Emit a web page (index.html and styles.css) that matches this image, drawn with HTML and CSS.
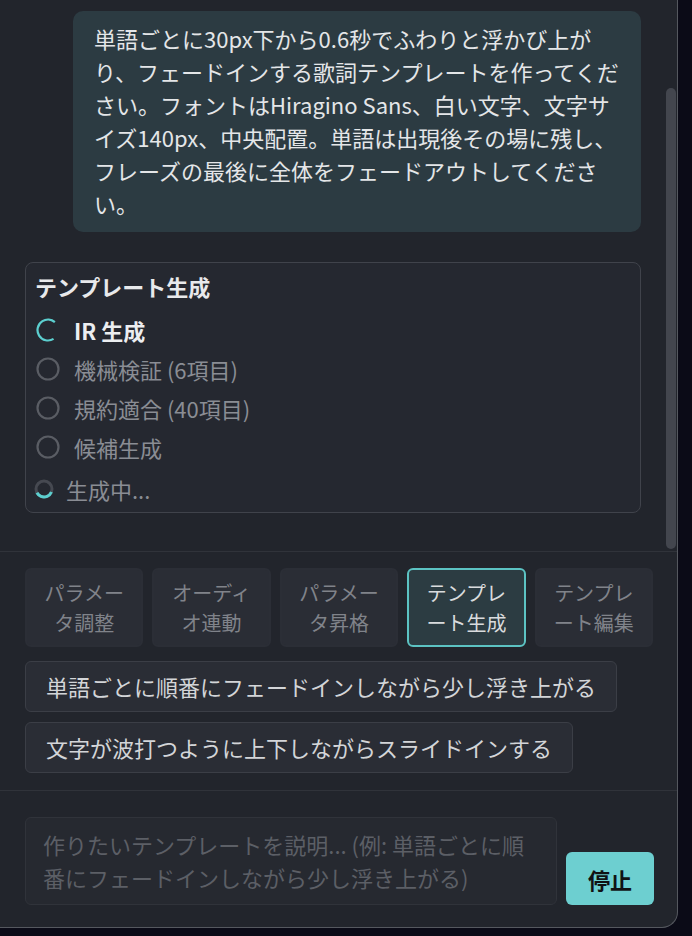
FILE: index.html
```html
<!DOCTYPE html>
<html lang="ja">
<head>
  <meta charset="UTF-8" />
  <title>テンプレート生成</title>
  <link rel="stylesheet" href="styles.css">
</head>
<body>

  <div class="panel">

    <div class="messages">
      <div class="thread">
        <div class="msg-user">
          単語ごとに30px下から0.6秒でふわりと浮かび上が<br>り、フェードインする歌詞テンプレートを作ってくだ<br>さい。フォントはHiragino Sans、白い文字、文字サ<br>イズ140px、中央配置。単語は出現後その場に残し、<br>フレーズの最後に全体をフェードアウトしてくださ<br>い。
        </div>

        <div class="progress-card">
          <h3>テンプレート生成</h3>
          <ul class="steps">
            <li class="step active">
              <svg width="24" height="24" viewBox="0 0 24 24">
                <circle cx="12" cy="12" r="10.5" fill="none" stroke="#5ccfcf" stroke-width="2.2" stroke-dasharray="46 66" transform="rotate(58 12 12)" />
              </svg>
              <span>IR 生成</span>
            </li>
            <li class="step">
              <svg width="24" height="24" viewBox="0 0 24 24">
                <circle cx="12" cy="12" r="10.5" fill="none" stroke="#5a5d64" stroke-width="2.2" />
              </svg>
              <span>機械検証 (6項目)</span>
            </li>
            <li class="step">
              <svg width="24" height="24" viewBox="0 0 24 24">
                <circle cx="12" cy="12" r="10.5" fill="none" stroke="#5a5d64" stroke-width="2.2" />
              </svg>
              <span>規約適合 (40項目)</span>
            </li>
            <li class="step">
              <svg width="24" height="24" viewBox="0 0 24 24">
                <circle cx="12" cy="12" r="10.5" fill="none" stroke="#5a5d64" stroke-width="2.2" />
              </svg>
              <span>候補生成</span>
            </li>
          </ul>
          <div class="status">
            <svg width="20" height="20" viewBox="0 0 20 20">
              <circle cx="10" cy="10" r="8" fill="none" stroke="#464951" stroke-width="3" />
              <circle cx="10" cy="10" r="8" fill="none" stroke="#5ccfcf" stroke-width="3" stroke-dasharray="18 50.3" transform="rotate(22 10 10)" />
            </svg>
            <span>生成中...</span>
          </div>
        </div>
      </div>
      <div class="scroll-thumb"></div>
    </div>

    <div class="actions">
      <div class="tabs">
        <button class="tab">パラメータ調整</button>
        <button class="tab">オーディオ連動</button>
        <button class="tab">パラメータ昇格</button>
        <button class="tab active">テンプレート生成</button>
        <button class="tab">テンプレート編集</button>
      </div>
      <div class="suggestions">
        <button class="suggestion">単語ごとに順番にフェードインしながら少し浮き上がる</button>
        <button class="suggestion">文字が波打つように上下しながらスライドインする</button>
      </div>
    </div>

    <div class="composer">
      <textarea class="prompt" placeholder="作りたいテンプレートを説明... (例: 単語ごとに順番にフェードインしながら少し浮き上がる)"></textarea>
      <button class="stop-btn">停止</button>
    </div>

  </div>

</body>
</html>
```

FILE: styles.css
```css
* {
  box-sizing: border-box;
}

body {
  margin: 0;
  background-color: #0b0b17;
  font-family: "Noto Sans CJK JP", "Noto Sans", sans-serif;
  color: #e4e6e8;
}

.panel {
  width: 678px;
  height: 928px;
  background-color: #22252c;
  border-right: 1px solid #55585f;
  border-bottom: 1px solid #55585f;
  border-bottom-right-radius: 16px;
  display: flex;
  flex-direction: column;
  overflow: hidden;
}

/* Conversa, alinhada ao fim */
.messages {
  position: relative;
  height: 551px;
  flex: none;
  overflow: hidden;
  display: flex;
  flex-direction: column;
  justify-content: flex-end;
  padding-right: 11px;
}

.scroll-thumb {
  position: absolute;
  top: 88px;
  right: 1px;
  width: 10px;
  height: 461px;
  background-color: #43464e;
  border-radius: 5px;
}

.thread {
  padding: 0 25px 38px;
}

.msg-user {
  margin-left: 48px;
  background-color: #2c3b42;
  border-radius: 10px;
  padding: 11px 18px 12px 21px;
  font-size: 22px;
  line-height: 33px;
  color: #e4e6e8;
}

.progress-card {
  margin-top: 30px;
  border: 1px solid #40434b;
  border-radius: 8px;
  background-color: #252830;
  padding: 7px 10px 7px;
}

.progress-card h3 {
  margin: 0 0 7px -1px;
  font-size: 22px;
  line-height: 33px;
  font-weight: bold;
  color: #e8e9eb;
}

.steps {
  list-style: none;
  margin: 0;
  padding: 0;
}

.step {
  height: 39px;
  display: flex;
  align-items: center;
  gap: 14px;
  font-size: 22px;
  color: #8a8d94;
}

.step svg {
  flex: none;
}

.step.active {
  color: #eceef0;
  font-weight: bold;
}

.status {
  margin-top: 6px;
  margin-left: -2px;
  height: 33px;
  display: flex;
  align-items: center;
  gap: 12px;
  font-size: 22px;
  color: #8a8d94;
}

/* Abas e sugestões */
.actions {
  border-top: 1px solid #30333a;
  padding: 16px 24px 17px 25px;
}

.tabs {
  display: flex;
  gap: 9px;
}

.tab {
  flex: 1;
  height: 79px;
  font-family: inherit;
  font-size: 20px;
  line-height: 30px;
  padding: 7px 10px;
  background-color: #2a2d35;
  border: 2px solid #2b2e36;
  border-radius: 6px;
  color: #80838a;
  text-align: center;
}

.tab.active {
  background-color: #2c3c42;
  border-color: #5cc3c3;
  color: #d9dbdd;
}

.suggestions {
  margin-top: 14px;
  display: flex;
  flex-direction: column;
  align-items: flex-start;
  gap: 10px;
}

.suggestion {
  font-family: inherit;
  font-size: 22px;
  line-height: 33px;
  padding: 8px 20px;
  background-color: #2a2d35;
  border: 1px solid #3b3e46;
  border-radius: 6px;
  color: #d3d5d8;
  text-align: left;
}

/* Caixa de texto */
.composer {
  border-top: 1px solid #30333a;
  padding: 26px 23px 22px 25px;
  display: flex;
  align-items: flex-end;
  gap: 9px;
}

.prompt {
  flex: 1;
  height: 88px;
  resize: none;
  font-family: inherit;
  font-size: 22px;
  line-height: 33px;
  padding: 10px 17px;
  background-color: #262930;
  border: 1px solid #30333a;
  border-radius: 6px;
  color: #e4e6e8;
  outline: none;
}

.prompt::placeholder {
  color: #5c5f66;
}

.stop-btn {
  flex: none;
  width: 88px;
  height: 53px;
  background-color: #6dcfd0;
  border: none;
  border-radius: 6px;
  font-family: inherit;
  font-size: 22px;
  font-weight: bold;
  color: #101214;
}
```
